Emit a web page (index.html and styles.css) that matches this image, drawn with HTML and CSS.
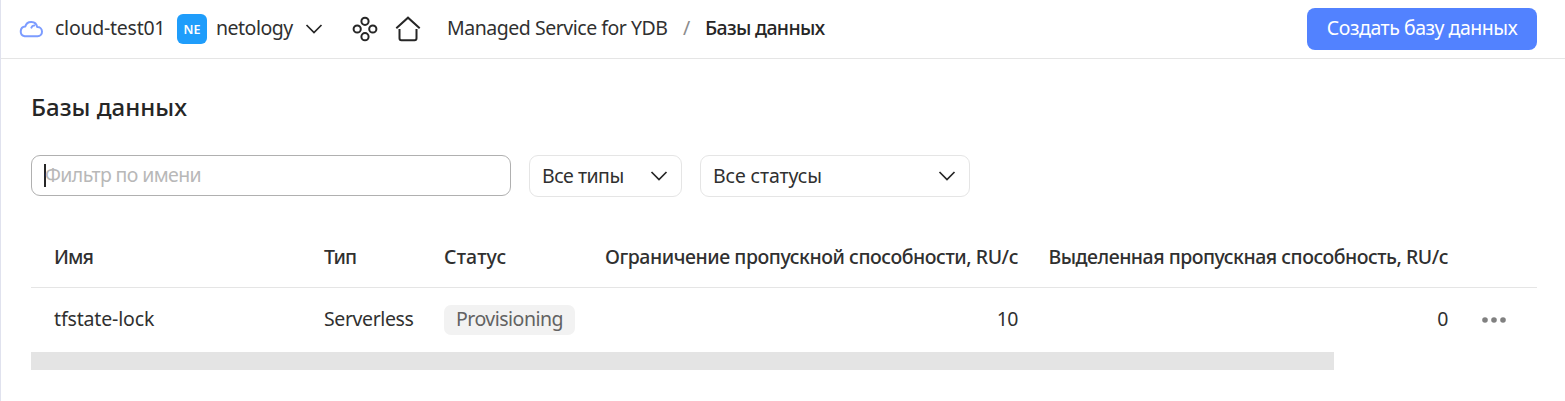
FILE: index.html
```html
<!DOCTYPE html>
<html lang="ru">
<head>
<meta charset="utf-8">
<title>Базы данных</title>
<link rel="stylesheet" href="styles.css">
</head>
<body>
<div class="page">
  <header class="topbar">
    <svg class="cloud" width="26" height="20" viewBox="0 0 26 20" fill="none" stroke="#7c9cff" stroke-width="2" stroke-linecap="round" stroke-linejoin="round"><path d="M6.7 17.3H19.6A4.6 4.6 0 0 0 19.2 8.1A6.1 6.1 0 0 0 7.3 7.6A4.9 4.9 0 0 0 6.7 17.3ZM13.4 8.6Q14.1 6.6 16.2 6.6"/></svg>
    <span class="t cloud-name">cloud-test01</span>
    <span class="avatar">NE</span>
    <span class="t folder-name">netology</span>
    <svg class="chev" width="18" height="10" viewBox="0 0 18 10"><path d="M1.5 1L9 8.5L16.5 1"/></svg>
    <svg class="dots4" width="26" height="26" viewBox="0 0 26 26"><circle cx="13" cy="5.3" r="3.6"/><circle cx="5.2" cy="13" r="3.6"/><circle cx="20.8" cy="13" r="3.6"/><circle cx="13" cy="20.7" r="3.6"/></svg>
    <svg class="home" width="26" height="26" viewBox="0 0 26 26"><path d="M1.3 12.2L13 1.7L24.7 12.2M4.5 13V22.3Q4.5 24.2 6.4 24.2H19.6Q21.5 24.2 21.5 22.3V13"/></svg>
    <span class="t service">Managed Service for YDB</span>
    <span class="slash">/</span>
    <span class="t current">Базы данных</span>
    <button class="create"><span class="t create-text">Создать базу данных</span></button>
  </header>
  <main class="content">
    <h1 class="title">Базы данных</h1>
    <div class="filters">
      <div class="search"><span class="caret"></span><span class="t placeholder">Фильтр по имени</span></div>
      <div class="select types"><span class="t types-text">Все типы</span><svg class="chev" width="18" height="10" viewBox="0 0 18 10"><path d="M1.5 1L9 8.5L16.5 1"/></svg></div>
      <div class="select statuses"><span class="t statuses-text">Все статусы</span><svg class="chev" width="18" height="10" viewBox="0 0 18 10"><path d="M1.5 1L9 8.5L16.5 1"/></svg></div>
    </div>
    <div class="row head">
      <span class="t h-name">Имя</span><span class="t h-type">Тип</span><span class="t h-status">Статус</span><span class="t num h-limit">Ограничение пропускной способности, RU/с</span><span class="t num h-alloc">Выделенная пропускная способность, RU/с</span><span></span>
    </div>
    <div class="row data">
      <span class="t d-name">tfstate-lock</span><span class="t d-type">Serverless</span><span><span class="badge">Provisioning</span></span><span class="t num">10</span><span class="t num">0</span>
      <svg class="more" width="24" height="6" viewBox="0 0 24 6"><circle cx="3" cy="3" r="2.8"/><circle cx="12" cy="3" r="2.8"/><circle cx="21" cy="3" r="2.8"/></svg>
    </div>
    <div class="scroll"></div>
  </main>
</div>
</body>
</html>
```
FILE: styles.css
```css
* { box-sizing: border-box; }
body { margin: 0; background: #fff; color: #303030; font: 400 19.5px/28px "Noto Sans", sans-serif; overflow: hidden; }
.page { height: 401px; border-left: 1px solid #e0e2ee; }
.t { white-space: nowrap; }
.topbar { height: 59px; border-bottom: 1px solid #e5e5e5; display: flex; align-items: center; padding: 0 28px 0 17px; }
.topbar > * { flex: none; }
.topbar > .t, .slash { padding-bottom: 2px; }
.cloud { width: 26px; }
.cloud-name { margin-left: 11px; width: 122px; letter-spacing: -0.25px; }
.avatar { width: 30px; height: 30px; border-radius: 6px; background: #1f9dfb; color: #fff; font: 600 12.5px/31px "Noto Sans", sans-serif; text-align: center; }
.folder-name { margin-left: 9px; width: 89px; letter-spacing: -0.5px; }
.chev { fill: none; stroke: #262626; stroke-width: 1.7; }
.dots4 { margin-left: 29px; fill: none; stroke: #262626; stroke-width: 2; }
.home { margin-left: 17px; fill: none; stroke: #262626; stroke-width: 2; }
.service { margin-left: 26px; width: 236px; letter-spacing: -0.47px; }
.slash { width: 22px; color: #8c8c8c; }
.current { color: #262626; font-weight: 500; letter-spacing: -0.65px; }
.create { margin-left: auto; width: 230px; height: 42px; padding: 0 0 2px; border: 0; border-radius: 8px; background: #5282ff; color: #fff; font: inherit; font-weight: 400; letter-spacing: -0.45px; }
.content { padding: 0 28px 0 30px; }
.title { margin: 30px 0 0; color: #262626; font: 500 24px/36px "Noto Sans", sans-serif; letter-spacing: 0.03px; }
.filters { display: flex; margin-top: 30px; height: 42px; }
.search { width: 480px; height: 41px; border: 1px solid #b0b0b0; border-radius: 9px; display: flex; align-items: center; padding-left: 12px; color: #b8b8b8; }
.caret { width: 2px; height: 23px; background: #262626; margin-right: -1px; }
.placeholder { letter-spacing: -0.62px; padding-bottom: 1px; }
.select { height: 42px; border: 1px solid #e5e5e5; border-radius: 9px; display: flex; align-items: center; justify-content: space-between; padding: 0 13px 0 12px; margin-left: 18px; letter-spacing: -0.5px; }
.types { width: 153px; }
.statuses { width: 270px; letter-spacing: -0.1px; }
.row { display: grid; grid-template-columns: 270px 120px 131px 443px 430px 1fr; align-items: center; padding-left: 23px; letter-spacing: -0.5px; }
.row .t { padding-bottom: 2px; }
.head { margin-top: 31px; height: 60px; border-bottom: 1px solid #e5e5e5; font-weight: 500; }
.h-name, .h-type { letter-spacing: -0.9px; }
.h-status { letter-spacing: 0.15px; }
.h-limit { letter-spacing: -0.45px; }
.h-alloc { letter-spacing: -0.49px; }
.data { height: 64px; }
.d-name { letter-spacing: -0.15px; }
.d-type { letter-spacing: -0.4px; }
.num { text-align: right; }
.badge { display: inline-block; width: 131px; height: 30px; border-radius: 7px; background: #f2f2f2; color: #626262; text-align: center; vertical-align: middle; letter-spacing: -0.5px; }
.more { margin-left: 34px; fill: #808080; }
.scroll { width: 1303px; height: 18px; background: #e4e4e4; }
```
